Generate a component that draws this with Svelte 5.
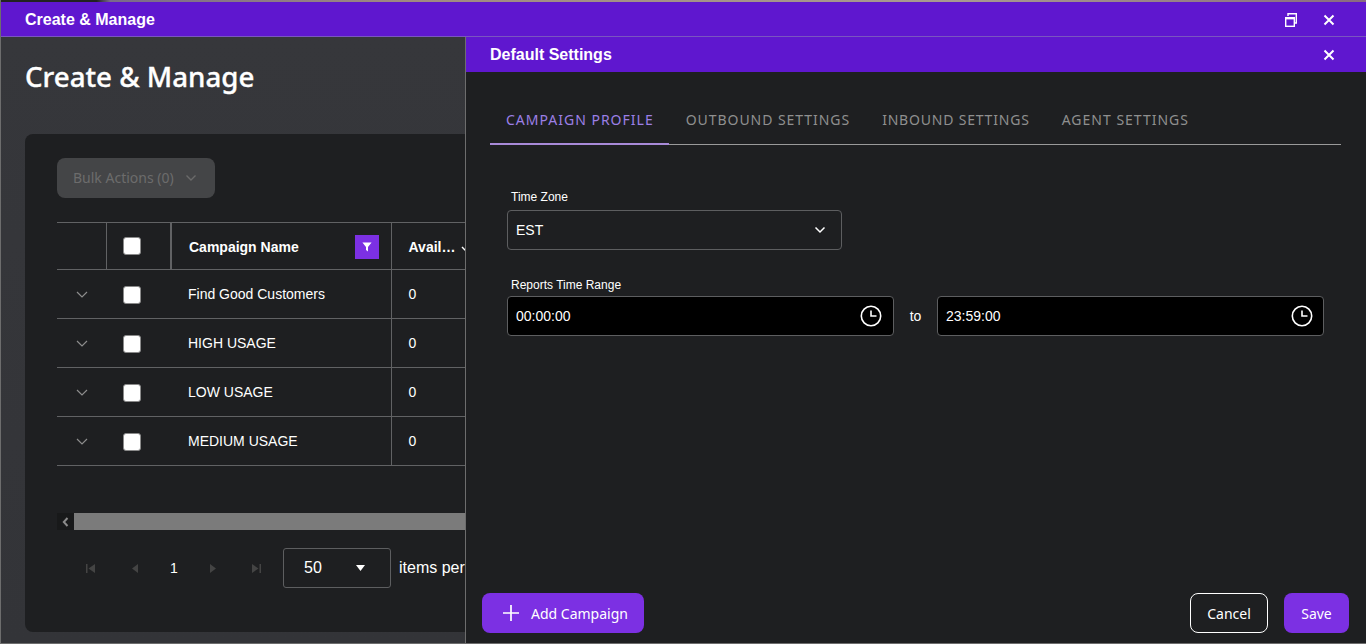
<script>
  const rows = ['Find Good Customers', 'HIGH USAGE', 'LOW USAGE', 'MEDIUM USAGE'];
  const tabs = ['CAMPAIGN PROFILE', 'OUTBOUND SETTINGS', 'INBOUND SETTINGS', 'AGENT SETTINGS'];
</script>

<div class="window">
  <div class="strip"></div>
  <header class="titlebar">
    <span class="titlebar-text">Create &amp; Manage</span>
    <div class="titlebar-icons">
      <svg class="restore" width="12" height="14" viewBox="0 0 12 14" fill="none" stroke="#fff">
        <path d="M3 3V.7h8.300V10H9.800" stroke-width="1.400" />
        <rect x=".7" y="4.700" width="8.600" height="8.600" stroke-width="1.400" />
        <path d="M.6 5.200h8.800" stroke-width="2.400" />
      </svg>
      <svg class="close" width="12" height="12" viewBox="0 0 12 12" stroke="#fff" stroke-width="2"><path d="M1.500 1.500l9 9M10.500 1.500l-9 9" /></svg>
    </div>
  </header>

  <main class="page">
    <h1>Create &amp; Manage</h1>
    <section class="card">
      <button class="bulk">
        Bulk Actions (0)
        <svg width="12" height="8" viewBox="0 0 12 8" fill="none" stroke="#6a6a6a" stroke-width="1.400"><path d="M1.500 1.500L6 6l4.500-4.500" /></svg>
      </button>

      <table>
        <thead>
          <tr>
            <th class="c-expand"></th>
            <th class="c-check"><span class="checkbox head-box"></span></th>
            <th class="c-name">
              <div class="name-head">
                <span>Campaign Name</span>
                <span class="filter">
                  <svg width="10" height="10" viewBox="0 0 10 10" fill="#fff"><path d="M.4 .6h9.200L6 5v4.400L4 8V5z" /></svg>
                </span>
              </div>
            </th>
            <th class="c-avail"><span class="avail">Avail…</span><svg class="avail-arrow" width="10" height="6" viewBox="0 0 10 6" fill="none" stroke="#fff" stroke-width="1.400"><path d="M1 1l4 4 4-4" /></svg></th>
          </tr>
        </thead>
        <tbody>
          {#each rows as row}
            <tr>
              <td class="c-expand nb">
                <svg width="12" height="7" viewBox="0 0 12 7" fill="none" stroke="#8d8d8d" stroke-width="1.200"><path d="M1 1l5 5 5-5" /></svg>
              </td>
              <td class="c-check nb"><span class="checkbox"></span></td>
              <td class="c-name">{row}</td>
              <td class="c-avail">0</td>
            </tr>
          {/each}
        </tbody>
      </table>

      <div class="scrollbar">
        <span class="scroll-arrow">
          <svg width="7" height="10" viewBox="0 0 7 10" fill="none" stroke="#8a8a8a" stroke-width="2"><path d="M5.500 1L1.800 5l3.700 4" /></svg>
        </span>
        <span class="scroll-thumb"></span>
      </div>

      <div class="pager">
        <div class="pager-nav">
          <svg width="9" height="9" viewBox="0 0 9 9" fill="#444"><path d="M0 0h1.500v9H0zM9 0v9L2.500 4.500z" /></svg>
          <svg class="prev" width="6" height="9" viewBox="0 0 6 9" fill="#444"><path d="M6 0v9L0 4.500z" /></svg>
          <span class="page-num">1</span>
          <svg width="6" height="9" viewBox="0 0 6 9" fill="#444"><path d="M0 0v9l6-4.500z" /></svg>
          <svg class="last" width="9" height="9" viewBox="0 0 9 9" fill="#444"><path d="M9 0H7.500v9H9zM0 0v9l6.500-4.500z" /></svg>
        </div>
        <div class="page-size">
          <span>50</span>
          <svg width="9" height="6" viewBox="0 0 9 6" fill="#fff"><path d="M0 0h9L4.500 6z" /></svg>
        </div>
        <span class="per-page">items per page</span>
      </div>
    </section>
  </main>

  <aside class="drawer">
    <div class="drawer-head">
      <span>Default Settings</span>
      <svg class="close" width="12" height="12" viewBox="0 0 12 12" stroke="#fff" stroke-width="2"><path d="M1.500 1.500l9 9M10.500 1.500l-9 9" /></svg>
    </div>

    <nav class="tabs">
      {#each tabs as tab, i}
        <span class="tab" class:active={i === 0}>{tab}</span>
      {/each}
    </nav>

    <div class="form">
      <label class="label" for="tz">Time Zone</label>
      <div class="select" id="tz">
        <span>EST</span>
        <svg width="12" height="8" viewBox="0 0 12 8" fill="none" stroke="#fff" stroke-width="1.500"><path d="M1.500 1.500L6 6l4.500-4.500" /></svg>
      </div>

      <span class="label range-label">Reports Time Range</span>
      <div class="range">
        <div class="time first">
          <span>00:00:00</span>
          <svg width="22" height="22" viewBox="0 0 22 22" fill="none" stroke="#fff" stroke-width="1.600"><circle cx="11" cy="11" r="9.700" /><path d="M11 5.500V11h5.500" /></svg>
        </div>
        <span class="to">to</span>
        <div class="time">
          <span>23:59:00</span>
          <svg width="22" height="22" viewBox="0 0 22 22" fill="none" stroke="#fff" stroke-width="1.600"><circle cx="11" cy="11" r="9.700" /><path d="M11 5.500V11h5.500" /></svg>
        </div>
      </div>
    </div>

    <footer class="actions">
      <button class="btn primary add">
        <svg width="18" height="18" viewBox="0 0 18 18" stroke="#fff" stroke-width="1.700"><path d="M9 1v16M1 9h16" /></svg>
        Add Campaign
      </button>
      <div class="actions-right">
        <button class="btn outline">Cancel</button>
        <button class="btn primary save">Save</button>
      </div>
    </footer>
  </aside>
</div>

<style>
  :global(body) {
    margin: 0;
    background: #1e1f21;
  }

  .window {
    position: relative;
    width: 1366px;
    height: 644px;
    overflow: hidden;
    box-sizing: border-box;
    display: flex;
    flex-direction: column;
    background: #36373b;
    border-left: 1px solid #6d6d6d;
    border-bottom: 1px solid #6d6d6d;
    font-family: "Liberation Sans", Arial, sans-serif;
    color: #fff;
  }

  .strip {
    height: 2px;
    flex: none;
    background: linear-gradient(90deg, #222 0 7%, #7a6a8a 8%, #a08a80 30%, #a89a90 70%, #8a6a80);
  }

  .titlebar {
    flex: none;
    height: 35px;
    box-sizing: border-box;
    background: #5f17cf;
    border-bottom: 1px solid #7a55c0;
    display: flex;
    align-items: center;
    justify-content: space-between;
    padding: 1px 31px 0 24px;
  }

  .titlebar-text {
    font-size: 16px;
    font-weight: 700;
  }

  .titlebar-icons {
    display: flex;
    align-items: center;
    gap: 26px;
  }

  .page {
    flex: 1;
    min-height: 0;
    padding: 0 0 0 24px;
    background: linear-gradient(180deg, #36373b, #333438);
    display: flex;
    flex-direction: column;
  }

  h1 {
    margin: 0;
    height: 97px;
    padding-top: 19px;
    box-sizing: border-box;
    font-family: "Noto Sans", sans-serif;
    font-size: 27.7px;
    line-height: 40px;
    font-weight: 500;
    -webkit-text-stroke: 0.35px #fff;
    color: #fff;
  }

  .card {
    width: 1330px;
    height: 498px;
    flex: none;
    box-sizing: border-box;
    background: #1e1f21;
    border-radius: 8px;
    padding: 24px 32px 0;
  }

  .bulk {
    display: flex;
    align-items: center;
    gap: 11px;
    width: 158px;
    height: 40px;
    padding: 0 0 1px 16px;
    border: 0;
    border-radius: 8px;
    background: #444547;
    color: #6c6c6c;
    font-family: "Noto Sans", sans-serif;
    font-size: 14px;
  }

  table {
    margin-top: 24px;
    border-collapse: collapse;
    table-layout: fixed;
    width: 419px;
    font-size: 14px;
  }

  th,
  td {
    padding: 0;
    border-bottom: 1px solid #616264;
    border-right: 1px solid #616264;
    box-sizing: border-box;
  }

  thead tr {
    border-top: 1px solid #616264;
  }

  th {
    height: 47px;
    text-align: left;
    font-weight: 700;
  }

  td {
    height: 49px;
  }

  .nb {
    border-right: 0;
  }

  .c-expand {
    width: 49px;
    text-align: center;
  }

  .c-expand svg {
    display: block;
    margin: 1px auto 0 19px;
  }

  .c-check {
    width: 65px;
    text-align: center;
  }

  th.c-check {
    border-right: 2px solid #616264;
  }

  .c-name {
    width: 220px;
    padding-left: 17px;
  }

  th.c-name {
    padding: 2px 12px 0 17px;
  }

  .c-avail {
    width: 85px;
    padding-left: 17px;
    border-right: 0;
    white-space: nowrap;
  }

  th.c-avail {
    padding-top: 2px;
  }

  .avail-arrow {
    margin-left: 6px;
  }

  .name-head {
    display: flex;
    align-items: center;
    justify-content: space-between;
  }

  .filter {
    width: 24px;
    height: 24px;
    background: #7c30e3;
    display: flex;
    align-items: center;
    justify-content: center;
  }

  .checkbox {
    display: block;
    width: 18px;
    height: 18px;
    box-sizing: border-box;
    margin: 1px auto 0;
    position: relative;
    left: -7px;
    background: #fff;
    border: 1px solid #8a8a8a;
    border-radius: 3px;
  }

  .head-box {
    margin-top: 0;
    left: -6px;
  }

  .scrollbar {
    margin-top: 47px;
    display: flex;
    height: 17px;
  }

  .scroll-arrow {
    width: 17px;
    background: #18191a;
    display: flex;
    align-items: center;
    justify-content: center;
  }

  .scroll-thumb {
    flex: 1;
    background: #7b7b7b;
  }

  .pager {
    margin-top: 18px;
    display: flex;
    align-items: center;
    height: 40px;
  }

  .pager-nav {
    width: 226px;
    box-sizing: border-box;
    padding-left: 28.5px;
    display: flex;
    align-items: center;
    gap: 32px;
  }

  .prev {
    margin-left: 5.5px;
  }

  .last {
    margin-left: 4.5px;
  }

  .page-num {
    font-size: 14px;
  }

  .page-size {
    box-sizing: border-box;
    width: 108px;
    height: 40px;
    border: 1px solid #5d5e60;
    border-radius: 3px;
    padding: 0 25px 0 20px;
    display: flex;
    align-items: center;
    justify-content: space-between;
    font-size: 16px;
  }

  .per-page {
    margin-left: 8px;
    font-size: 16px;
  }

  .drawer {
    position: absolute;
    top: 37px;
    left: 464px;
    right: 0;
    bottom: 0;
    box-sizing: border-box;
    background: #1e1f21;
    border-left: 1px solid #6d6d6d;
    display: flex;
    flex-direction: column;
  }

  .drawer-head {
    flex: none;
    height: 35px;
    background: #5f17cf;
    display: flex;
    align-items: center;
    justify-content: space-between;
    padding: 0 31px 0 24px;
    font-size: 16px;
    font-weight: 700;
  }

  .tabs {
    flex: none;
    margin: 26px 25px 0 24px;
    height: 47px;
    box-sizing: border-box;
    border-bottom: 1px solid #9a9a9a;
    display: flex;
    font-family: "Noto Sans", sans-serif;
    font-size: 14px;
    letter-spacing: 1px;
    color: #8f8f8f;
  }

  .tab {
    padding: 0 16px;
    height: 47px;
    box-sizing: border-box;
    line-height: 44px;
    white-space: nowrap;
  }

  .tab:nth-child(2) {
    letter-spacing: 0.95px;
  }

  .tab:nth-child(3) {
    letter-spacing: 0.8px;
  }

  .tab.active {
    color: #9c7fe6;
    border-bottom: 2px solid #a88ad8;
    padding-right: 15px;
    margin-right: 1px;
  }

  .form {
    flex: 1;
    padding: 45px 41px 0;
    display: flex;
    flex-direction: column;
    font-size: 14px;
  }

  .label {
    font-size: 12px;
    line-height: 14px;
    padding-left: 4px;
    margin-bottom: 6px;
  }

  .range-label {
    margin-top: 28px;
    margin-bottom: 4px;
  }

  .select {
    box-sizing: border-box;
    width: 335px;
    height: 40px;
    border: 1px solid #5d5e60;
    border-radius: 4px;
    padding: 0 15px 0 8px;
    display: flex;
    align-items: center;
    justify-content: space-between;
  }

  .range {
    display: flex;
    align-items: center;
  }

  .time {
    box-sizing: border-box;
    width: 387px;
    height: 40px;
    background: #000;
    border: 1px solid #5d5e60;
    border-radius: 4px;
    padding: 0 10px 0 8px;
    display: flex;
    align-items: center;
    justify-content: space-between;
  }

  .time.first {
    padding-right: 11px;
  }

  .to {
    width: 43px;
    text-align: center;
    font-size: 14px;
  }

  .actions {
    flex: none;
    height: 50px;
    padding: 0 17px 0 16px;
    display: flex;
    justify-content: space-between;
    font-family: "Noto Sans", sans-serif;
  }

  .actions-right {
    display: flex;
    gap: 16px;
  }

  .btn {
    height: 40px;
    box-sizing: border-box;
    border-radius: 8px;
    font-family: inherit;
    font-size: 14px;
    color: #fff;
    border: 0;
    padding: 0;
  }

  .primary {
    background: #7c30e3;
  }

  .add {
    width: 162px;
    display: flex;
    align-items: center;
    gap: 11px;
    padding-left: 20px;
  }

  .save {
    width: 65px;
  }

  .outline {
    width: 78px;
    background: transparent;
    border: 1px solid #fff;
  }
</style>
